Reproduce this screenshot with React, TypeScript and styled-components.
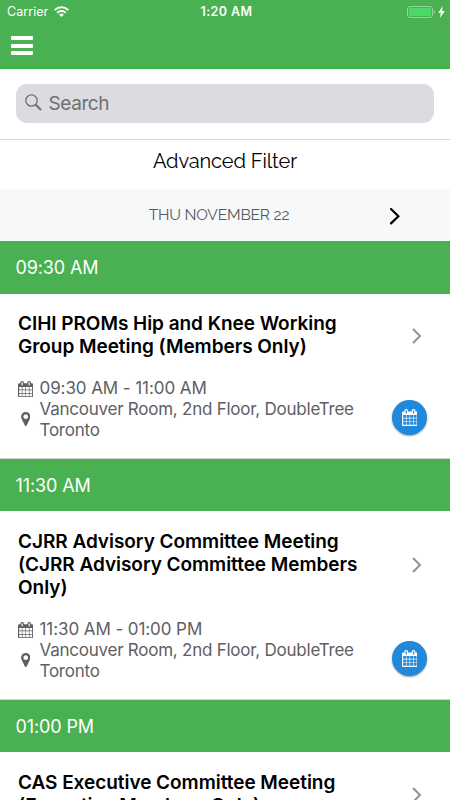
import React from 'react';
import styled, { createGlobalStyle } from 'styled-components';

const GREEN = '#49b152';

const GlobalStyle = createGlobalStyle`
  *, *::before, *::after { box-sizing: border-box; }
  body { margin: 0; background: #fff; overflow: hidden; }
`;

const Screen = styled.main`
  display: flex;
  flex-direction: column;
  width: 450px;
  height: 800px;
  overflow: hidden;
  background: #fff;
  color: #000;
  font-family: Inter, 'Liberation Sans', sans-serif;
`;

const Header = styled.header`
  flex: none;
  height: 69px;
  background: ${GREEN};
  border-bottom: 1px solid #35ad40;
  color: #fff;
`;

const StatusBar = styled.div`
  display: grid;
  grid-template-columns: 1fr auto 1fr;
  align-items: center;
  height: 23px;
  padding: 0 5px 0 7px;
  font-size: 12.5px;
  line-height: 23px;
`;

const Carrier = styled.div`
  display: flex;
  align-items: center;
  gap: 6px;
  letter-spacing: 0.05px;
`;

const Clock = styled.div`
  padding-left: 1px;
  font-weight: 600;
  letter-spacing: 0.4px;
`;

const Power = styled.div`
  display: flex;
  align-items: center;
  justify-content: flex-end;
  gap: 3px;
`;

const MenuButton = styled.button`
  display: flex;
  flex-direction: column;
  gap: 3.6px;
  margin: 13px 0 0 11px;
  padding: 0;
  border: 0;
  background: none;
`;

const MenuBar = styled.span`
  width: 22px;
  height: 4px;
  border-radius: 1px;
  background: #fff;
`;

const SearchArea = styled.div`
  flex: none;
  height: 71px;
  padding: 15px 16px 0;
  border-bottom: 1px solid #d5d5d7;
`;

const SearchField = styled.div`
  display: flex;
  align-items: center;
  height: 39px;
  padding-left: 9px;
  gap: 6.5px;
  border-radius: 11px;
  background: #dcdbe0;
  color: #6f6f73;
  font-size: 19px;
  letter-spacing: -0.4px;

  svg {
    margin-top: -3px;
  }
`;

const FilterButton = styled.button`
  flex: none;
  height: 49px;
  padding: 0 0 7px;
  border: 0;
  background: #fff;
  color: #000;
  font: 20px/42px Raleway, Lato, sans-serif;
  letter-spacing: -0.1px;
`;

const DateBar = styled.div`
  flex: none;
  display: grid;
  grid-template-columns: 1fr auto 1fr;
  align-items: center;
  height: 52px;
  padding: 0 49px 0 37px;
  background: #f7f8fa;
  color: #58585a;
  font: 15.5px/52px Raleway, Lato, sans-serif;
  letter-spacing: -0.17px;
`;

const DateLabel = styled.span`
  grid-column: 2;
`;

const NextDay = styled.span`
  display: flex;
  justify-content: flex-end;
  padding-top: 1px;
`;

const TimeBand = styled.h2`
  flex: none;
  height: 52.7px;
  margin: 0;
  padding-left: 15.5px;
  background: ${GREEN};
  color: #fff;
  font-size: 18px;
  font-weight: 400;
  line-height: 54px;
  letter-spacing: -0.12px;
`;

const Card = styled.article`
  flex: none;
  display: flex;
  justify-content: space-between;
  position: relative;
  padding: 18.3px 28px 16.1px 18px;
  border-bottom: 1px solid #d3d6d3;
`;

const CardBody = styled.div`
  display: flex;
  flex-direction: column;
  gap: 19.7px;
`;

const Title = styled.h3`
  margin: 0;
  font-size: 19px;
  font-weight: 600;
  line-height: 23.4px;
  letter-spacing: -0.04px;
  white-space: nowrap;
`;

const Details = styled.div`
  display: grid;
  grid-template-columns: 15px auto;
  column-gap: 6.5px;
  align-items: center;
  justify-items: center;
  justify-content: start;
  color: #606062;
  font-size: 17px;
  line-height: 21px;
`;

const DetailText = styled.span<{ $spacing?: number }>`
  justify-self: start;
  white-space: nowrap;
  letter-spacing: ${({ $spacing = 0 }) => $spacing}px;
`;

const Disclosure = styled.span<{ $inset: number }>`
  position: absolute;
  right: 28.5px;
  top: ${({ $inset }) => $inset}px;
  display: flex;
`;

const CalendarButton = styled.button`
  align-self: flex-end;
  display: flex;
  align-items: center;
  justify-content: center;
  width: 35px;
  height: 35px;
  margin: 0 -5px 6.4px 0;
  padding: 0;
  border: 0;
  border-radius: 50%;
  background: #2089dc;
  color: #fff;
  box-shadow: 0 1px 2px rgba(0, 0, 0, 0.4);
`;

const MarkerIcon = styled.svg`
  margin-bottom: 3px;
`;

const Calendar = ({ size = 16.5 }: { size?: number }) => (
  <svg width={size * 0.9286} height={size} viewBox="0 0 1664 1792" fill="currentColor">
    <path d="M128 1664h288v-288h-288v288zm352 0h320v-288h-320v288zm-352-352h288v-320h-288v320zm352 0h320v-320h-320v320zm-352-384h288v-288h-288v288zm736 736h320v-288h-320v288zm-384-736h320v-288h-320v288zm768 736h288v-288h-288v288zm-384-352h320v-320h-320v320zm-352-864v-288q0-13-9.5-22.5t-22.5-9.5h-64q-13 0-22.5 9.5t-9.5 22.5v288q0 13 9.5 22.5t22.5 9.5h64q13 0 22.5-9.5t9.5-22.5zm736 864h288v-320h-288v320zm-384-384h320v-288h-320v288zm384 0h288v-288h-288v288zm32-480v-288q0-13-9.5-22.5t-22.5-9.5h-64q-13 0-22.5 9.5t-9.5 22.5v288q0 13 9.5 22.5t22.5 9.5h64q13 0 22.5-9.5t9.5-22.5zm384-64v1280q0 52-38 90t-90 38h-1408q-52 0-90-38t-38-90v-1280q0-52 38-90t90-38h128v-96q0-66 47-113t113-47h64q66 0 113 47t47 113v96h384v-96q0-66 47-113t113-47h64q66 0 113 47t47 113v96h128q52 0 90 38t38 90z" />
  </svg>
);

const Marker = () => (
  <MarkerIcon width="9.5" height="14" viewBox="0 128 1024 1536" fill="currentColor">
    <path d="M768 640q0-106-75-181t-181-75-181 75-75 181 75 181 181 75 181-75 75-181zm256 0q0 109-33 179l-364 774q-16 33-47.5 52t-67.5 19-67.5-19-46.5-52l-365-774q-33-70-33-179 0-212 150-362t362-150 362 150 150 362z" />
  </MarkerIcon>
);

const Wifi = () => (
  <svg width="15" height="11" viewBox="0 0 15 11" fill="none" stroke="#fff" strokeWidth="2">
    <path d="M.7 4.1a9.7 9.7 0 0 1 13.6 0" />
    <path d="M3.2 6.7a6.1 6.1 0 0 1 8.6 0" />
    <path d="M7.5 11 5.2 8.7a3.2 3.2 0 0 1 4.6 0z" fill="#fff" stroke="none" />
  </svg>
);

const Battery = () => (
  <svg width="28" height="12" viewBox="0 0 28 12">
    <rect x=".5" y=".5" width="25" height="11" rx="2.5" fill="none" stroke="#9bd3a0" />
    <rect x="2" y="2" width="22" height="8" rx="1.2" fill="#4cd964" />
    <path d="M26.8 4c1.6.5 1.6 3.5 0 4z" fill="#9bd3a0" />
  </svg>
);

const Bolt = () => (
  <svg width="7" height="12" viewBox="0 0 7 12" fill="#fff">
    <path d="M4.7 0 .2 6.7h2.6L1.9 12l4.9-7H4z" />
  </svg>
);

const Magnifier = () => (
  <svg width="17" height="17" viewBox="0 0 17 17" fill="none" stroke="currentColor">
    <circle cx="6.5" cy="6.5" r="5.7" strokeWidth="1.3" />
    <path d="m10.8 10.8 5.2 5.2" strokeWidth="2" />
  </svg>
);

const Chevron = () => (
  <svg width="10" height="16" viewBox="0 0 10 16" fill="none" stroke="#929294" strokeWidth="2">
    <path d="m1 1 7 7-7 7" />
  </svg>
);

const events = [
  {
    time: '09:30 AM',
    title: ['CIHI PROMs Hip and Knee Working', 'Group Meeting (Members Only)'],
    range: '09:30 AM - 11:00 AM',
    chevronTop: 34.5,
  },
  {
    time: '11:30 AM',
    title: ['CJRR Advisory Committee Meeting', '(CJRR Advisory Committee Members', 'Only)'],
    range: '11:30 AM - 01:00 PM',
    chevronTop: 46,
  },
  {
    time: '01:00 PM',
    title: ['CAS Executive Committee Meeting', '(Executive Members Only)'],
    range: '',
    chevronTop: 34.5,
  },
];

export default function App() {
  return (
    <Screen>
      <GlobalStyle />
      <Header>
        <StatusBar>
          <Carrier>Carrier <Wifi /></Carrier>
          <Clock>1:20 AM</Clock>
          <Power><Battery /><Bolt /></Power>
        </StatusBar>
        <MenuButton aria-label="Menu"><MenuBar /><MenuBar /><MenuBar /></MenuButton>
      </Header>
      <SearchArea>
        <SearchField><Magnifier />Search</SearchField>
      </SearchArea>
      <FilterButton>Advanced Filter</FilterButton>
      <DateBar>
        <DateLabel>THU NOVEMBER 22</DateLabel>
        <NextDay>
          <svg width="12" height="18" viewBox="0 0 12 18" fill="none" stroke="#000" strokeWidth="2.2" strokeLinecap="round">
            <path d="m2 2 7.4 7.2-7.4 7.2" />
          </svg>
        </NextDay>
      </DateBar>
      {events.map((event) => (
        <React.Fragment key={event.time}>
          <TimeBand>{event.time}</TimeBand>
          <Card>
            <CardBody>
              <Title>
                {event.title.map((line) => <div key={line}>{line}</div>)}
              </Title>
              {event.range && (
                <Details>
                  <Calendar />
                  <DetailText $spacing={-0.08}>{event.range}</DetailText>
                  <Marker />
                  <DetailText $spacing={-0.24}>Vancouver Room, 2nd Floor, DoubleTree<br />Toronto</DetailText>
                </Details>
              )}
            </CardBody>
            <Disclosure $inset={event.chevronTop}><Chevron /></Disclosure>
            {event.range && (
              <CalendarButton aria-label="Add to calendar"><Calendar size={17} /></CalendarButton>
            )}
          </Card>
        </React.Fragment>
      ))}
    </Screen>
  );
}
